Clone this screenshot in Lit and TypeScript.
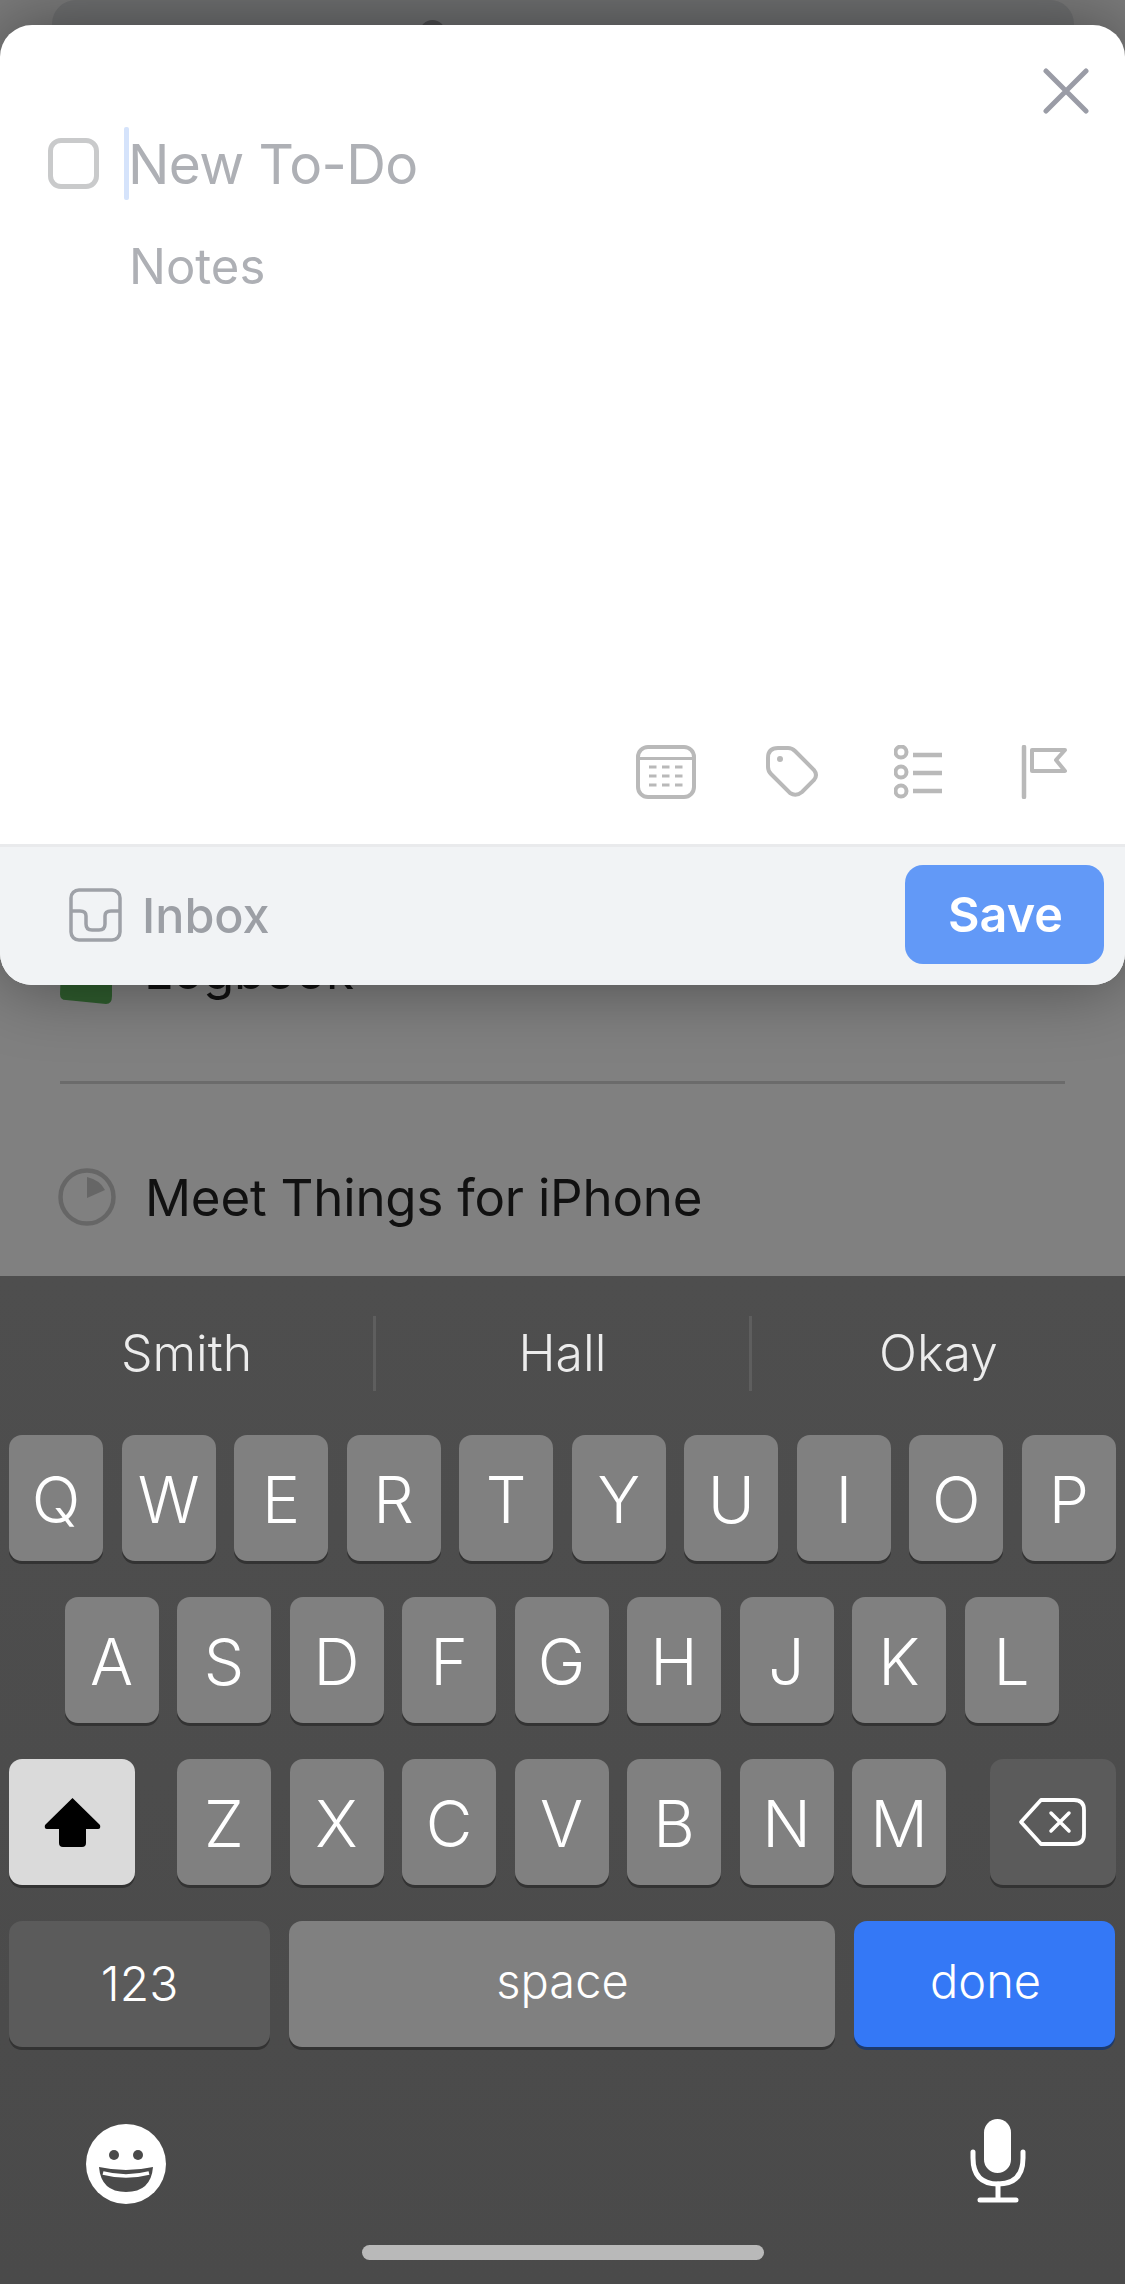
import { LitElement, html, css, svg } from "lit";
import { customElement } from "lit/decorators.js";

const row1 = "QWERTYUIOP".split("");
const row2 = "ASDFGHJKL".split("");
const row3 = "ZXCVBNM".split("");

@customElement("app-root")
export class AppRoot extends LitElement {
  static styles = css`
    :host { display: block; width: 1125px; height: 2284px; position: relative; overflow: hidden; background: #808080; font-family: Inter, "Liberation Sans", sans-serif; }
    .page { display: flex; flex-direction: column; height: 2284px; }
    .behind { height: 1276px; flex: none; display: flex; flex-direction: column; overflow: hidden; background: #808080; position: relative; }
    .top { height: 40px; flex: none; background: #7b7b7b; padding: 0 51px 0 52px; }
    .topcard { height: 40px; background: #6f7071; border-radius: 24px 24px 0 0; }
    .list { flex: 1; padding: 884px 60px 0; display: flex; flex-direction: column; }
    .row { display: flex; align-items: center; gap: 29px; height: 100px; color: #111; font-size: 51px; letter-spacing: -0.2px; }
    .meet { margin-left: -2px; }
    .logbook { gap: 30px; }
    .logbook span { padding-bottom: 8px; }
    .divider { height: 3px; background: #6b6b6b; margin: 57px 0 63px; }
    .sheet { position: absolute; left: 0; top: 25px; width: 1125px; height: 960px; border-radius: 32px; background: #fff; box-shadow: 0 0 70px rgba(0,0,0,.42); display: flex; flex-direction: column; overflow: hidden; }
    .body { flex: 1; display: flex; flex-direction: column; position: relative; padding: 102px 0 0 48px; }
    .title { display: flex; align-items: center; height: 73px; }
    .check { width: 51px; height: 51px; border: 5.5px solid #c9cacb; border-radius: 13px; box-sizing: border-box; margin-right: 25px; }
    .caret { width: 5px; height: 73px; background: #d5e3fb; border-radius: 2px; }
    .ph { font-size: 55px; color: #aeb0b5; letter-spacing: -0.6px; margin-left: -1px; }
    .notes { font-size: 49px; color: #aeb0b5; margin: 38px 0 0 81px; line-height: 58px; }
    .close { position: absolute; left: 1043px; top: 43px; }
    .tools { position: absolute; top: 720px; left: 636px; display: flex; align-items: flex-start; }
    .bar { height: 141px; flex: none; box-sizing: border-box; border-top: 3px solid #e9eaec; background: #f1f3f5; display: flex; align-items: center; padding: 0 21px 3px 69px; }
    .inbox { font-size: 48.5px; font-weight: 500; color: #9c9fa5; margin-left: 20px; flex: 1; padding-top: 2px; }
    .save { width: 199px; height: 99px; background: #6299f7; color: #fff; border-radius: 18px; font-size: 48.5px; font-weight: 600; display: flex; align-items: center; justify-content: center; padding-left: 2px; box-sizing: border-box; }
    .kb { flex: 1; background: linear-gradient(#4e4e4e, #4a4a4a); display: flex; flex-direction: column; position: relative; }
    .sugg { height: 159px; display: flex; align-items: center; flex: none; }
    .s { flex: 1; text-align: center; color: #ececec; font-size: 50px; font-weight: 300; padding-bottom: 5px; }
    .sep { width: 3px; height: 75px; background: #5e5e5e; flex: none; margin-bottom: 4px; }
    .krow { display: flex; gap: 18.5px; height: 126px; margin-bottom: 36px; flex: none; }
    .r1 { padding: 0 9px; }
    .r2 { padding: 0 65.5px 0 64.5px; }
    .r3 { padding: 0 9px; justify-content: space-between; gap: 0; }
    .mid { display: flex; gap: 18.5px; margin-left: -2px; }
    .r4 { padding: 0 10px 0 9px; }
    .key { width: 94px; flex: none; height: 126px; background: #808080; color: #fff; border-radius: 13px; box-shadow: 0 3px 0 #333; display: flex; align-items: center; justify-content: center; font-size: 64px; font-weight: 300; box-sizing: border-box; padding-top: 2px; }
    .r1 .key { flex: 1; width: auto; }
    .wide { width: 126px; padding-top: 0; }
    .dark { background: #5b5b5b; }
    .shift { background: #dadada; }
    .n123 { width: 261px; font-size: 48px; padding: 0 0 2px; }
    .space { flex: 1; font-size: 47px; padding: 0 0 7px 2px; margin-right: 1px; }
    .done { width: 261px; background: #3478f6; font-size: 47px; box-shadow: 0 3px 0 #1e3a6b; padding: 0 0 8px 2px; }
    .bottom { display: flex; justify-content: space-between; align-items: flex-start; padding: 41px 99px 0 86px; flex: none; }
    .mic { margin-top: -5px; }
    .home { position: absolute; left: 362px; top: 969px; width: 402px; height: 15px; border-radius: 8px; background: #b9b9b9; }
    svg { display: block; flex: none; }
    .bump { position: absolute; left: 420px; top: 20px; width: 25px; height: 24px; border-radius: 50%; background: #4d4d4f; }
  `;

  private icon(w: number, h: number, body: unknown, ml = 0, cls = "") {
    return html`<svg class=${cls} width=${w} height=${h} viewBox="0 0 ${w} ${h}" style=${ml ? `margin-left:${ml}px` : ""}>${body}</svg>`;
  }

  render() {
    const c = "#b9b9b9";
    const calendarDash = [22, 31, 40].flatMap((y) => [13, 26, 39].map((x) => svg`<rect x=${x} y=${y - 1.5} width="7.5" height="3" fill=${c}/>`));
    return html`
      <div class="page">
        <div class="behind">
          <div class="top"><div class="topcard"></div></div>
          <div class="bump"></div>
          <div class="list">
            <div class="row logbook">
              <svg width="54" height="60" viewBox="0 0 54 60"><path d="M2 2H52V52Q52 60 46 60L6 56Q0 56 0 50Z" fill="#2f5d2e"/></svg>
              <span>Logbook</span>
            </div>
            <div class="divider"></div>
            <div class="row meet">
              <svg width="58" height="58" viewBox="0 0 58 58">
                <circle cx="29" cy="29" r="26.5" fill="none" stroke="#666" stroke-width="4.5"/>
                <path d="M29 9 Q42 12 47 22 L29 30Z" fill="#666"/>
              </svg>
              <span>Meet Things for iPhone</span>
            </div>
          </div>
        </div>
        <div class="kb">
          <div class="sugg">
            <div class="s">Smith</div><div class="sep"></div><div class="s">Hall</div><div class="sep"></div><div class="s">Okay</div>
          </div>
          <div class="krow r1">${row1.map((k) => html`<div class="key">${k}</div>`)}</div>
          <div class="krow r2">${row2.map((k) => html`<div class="key">${k}</div>`)}</div>
          <div class="krow r3">
            <div class="key wide shift">
              <svg width="57" height="49" viewBox="0 0 57 49"><path d="M28.5 0 L56 27 Q57 31 54 31 H42 V45 Q42 49 38 49 H19 Q15 49 15 45 V31 H3 Q0 31 1 27Z" fill="#000"/></svg>
            </div>
            <div class="mid">${row3.map((k) => html`<div class="key">${k}</div>`)}</div>
            <div class="key wide dark">
              <svg width="70" height="50" viewBox="0 0 70 50" fill="none" stroke="#fff" stroke-width="3.8" stroke-linejoin="round">
                <path d="M3 25 L23 3 H56 Q66 3 66 13 V37 Q66 47 56 47 H23 Z"/>
                <path d="M33 16 L51 34 M51 16 L33 34" stroke-linecap="round" stroke-width="3.5"/>
              </svg>
            </div>
          </div>
          <div class="krow r4">
            <div class="key n123 dark">123</div>
            <div class="key space">space</div>
            <div class="key done">done</div>
          </div>
          <div class="bottom">
            <svg width="80" height="80" viewBox="0 0 80 80">
              <circle cx="40" cy="40" r="40" fill="#fff"/>
              <circle cx="28" cy="31" r="5" fill="#4a4a4a"/><circle cx="52" cy="31" r="5" fill="#4a4a4a"/>
              <path d="M13 43 Q40 49 67 43 Q65 68 40 68 Q15 68 13 43Z" fill="#4a4a4a"/>
              <path d="M17 49 Q40 55 63 49" fill="none" stroke="#fff" stroke-width="3.5"/>
            </svg>
            <svg class="mic" width="56" height="86" viewBox="0 0 56 86">
              <rect x="14" y="0" width="27" height="54" rx="13.5" fill="#fff"/>
              <path d="M3 33 V39 Q3 65 28 65 Q53 65 53 39 V33" fill="none" stroke="#fff" stroke-width="5" stroke-linecap="round"/>
              <path d="M28 65 V81 M10 81 H46" fill="none" stroke="#fff" stroke-width="5" stroke-linecap="round"/>
            </svg>
          </div>
          <div class="home"></div>
        </div>
      </div>
      <div class="sheet">
        <div class="body">
          <div class="title"><div class="check"></div><div class="caret"></div><div class="ph">New To-Do</div></div>
          <div class="notes">Notes</div>
          <svg class="close" width="46" height="46" viewBox="0 0 46 46"><path d="M3 3 L43 43 M43 3 L3 43" stroke="#9a9ca6" stroke-width="5" stroke-linecap="round" fill="none"/></svg>
          <div class="tools">
            ${this.icon(60, 54, svg`
              <rect x="2" y="2" width="56" height="50" rx="10" fill="none" stroke=${c} stroke-width="4"/>
              <path d="M4 13.5 H56" stroke=${c} stroke-width="3"/>
              ${calendarDash}`)}
            ${this.icon(53, 54, svg`
              <path d="M12 3 H22 Q26 3 29 6 L48 25 Q52 30 48 35 L36 47 Q30 52 24 48 L5 29 Q2 26 2 22 V13 Q2 3 12 3Z" fill="none" stroke=${c} stroke-width="4"/>
              <circle cx="14" cy="14" r="3" fill=${c}/>`, 70)}
            ${this.icon(49, 54, svg`
              <g fill="none" stroke=${c}>
              <circle cx="7" cy="7" r="5.5" stroke-width="4"/><circle cx="7" cy="27" r="5.5" stroke-width="4"/><circle cx="7" cy="46" r="5.5" stroke-width="4"/>
              <path d="M19 10 H48 M19 28 H48 M19 46 H48" stroke-width="4.5"/></g>`, 75)}
            ${this.icon(48, 54, svg`
              <g fill="none" stroke=${c} stroke-width="4.5">
              <path d="M3 2 V52" stroke-linecap="round"/>
              <path d="M11 5 H44 L35 15 L44 26 H11 Z" stroke-width="4" stroke-linejoin="round"/></g>`, 78)}
          </div>
        </div>
        <div class="bar">
          <svg width="53" height="54" viewBox="0 0 53 54" fill="none" stroke="#9ea1a7" stroke-width="3.5">
            <rect x="2" y="2" width="49" height="50" rx="8"/>
            <path d="M2 23 H11 Q17 23 17 28 V36 Q17 42 23 42 H30 Q36 42 36 36 V28 Q36 23 42 23 H51"/>
          </svg>
          <span class="inbox">Inbox</span>
          <div class="save">Save</div>
        </div>
      </div>
    `;
  }
}
